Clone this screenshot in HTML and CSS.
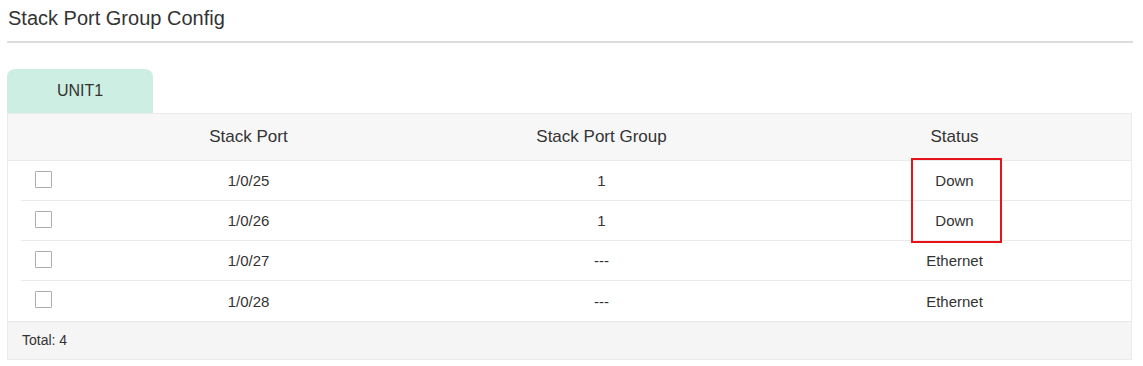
FILE: index.html
```html
<!DOCTYPE html>
<html lang="en">
<head>
  <meta charset="UTF-8" />
  <title>Stack Port Group Config</title>
  <link rel="stylesheet" href="styles.css">
</head>
<body>
  <div class="page">
    <h1 class="title">Stack Port Group Config</h1>

    <div class="tabs">
      <div class="tab active">UNIT1</div>
    </div>

    <div class="grid-wrap">
      <div class="row head">
        <div class="cell check"></div>
        <div class="cell">Stack Port</div>
        <div class="cell">Stack Port Group</div>
        <div class="cell">Status</div>
      </div>

      <div class="row">
        <div class="cell check"><span class="box"></span></div>
        <div class="cell">1/0/25</div>
        <div class="cell">1</div>
        <div class="cell">Down</div>
      </div>
      <div class="row">
        <div class="cell check"><span class="box"></span></div>
        <div class="cell">1/0/26</div>
        <div class="cell">1</div>
        <div class="cell">Down</div>
      </div>
      <div class="row">
        <div class="cell check"><span class="box"></span></div>
        <div class="cell">1/0/27</div>
        <div class="cell">---</div>
        <div class="cell">Ethernet</div>
      </div>
      <div class="row last">
        <div class="cell check"><span class="box"></span></div>
        <div class="cell">1/0/28</div>
        <div class="cell">---</div>
        <div class="cell">Ethernet</div>
      </div>

      <div class="footer">Total: 4</div>

      <!-- highlight around the Down statuses -->
      <div class="mark"></div>
    </div>
  </div>
</body>
</html>
```

FILE: styles.css
```css
body {
  margin: 0;
  padding: 0;
  background: #fff;
  color: #333;
  font-family: "Liberation Sans", Arial, sans-serif;
}

.page {
  padding: 0 10px 0 7px;
}

.title {
  margin: 0;
  padding: 6px 0 11px 1px;
  font-size: 20px;
  line-height: 24px;
  font-weight: normal;
  color: #333;
  border-bottom: 2px solid #dcdcdc;
}

.tabs {
  display: flex;
  margin-top: 26px;
}

.tab {
  width: 146px;
  height: 44px;
  line-height: 44px;
  text-align: center;
  font-size: 16px;
  color: #333;
  border-radius: 8px 8px 0 0;
}

.tab.active {
  background: #cdeee2;
}

.grid-wrap {
  position: relative;
  border: 1px solid #ebebeb;
  width: 1123px;
}

.row {
  display: grid;
  grid-template-columns: 64px repeat(3, 1fr);
  height: 40px;
}

.row.head {
  height: 47px;
  background: #f7f7f7;
  font-size: 17px;
}

.cell {
  display: flex;
  align-items: center;
  justify-content: center;
  border-bottom: 1px solid #ebebeb;
  font-size: 15px;
}

.row.head .cell {
  font-size: 17px;
}

.row .check {
  justify-content: flex-start;
  margin-left: 13px;
  padding-left: 14px;
  padding-bottom: 3px;
}

.row.head .check {
  margin-left: 0;
}

.row.last .cell {
  border-bottom: none;
}

.box {
  display: inline-block;
  width: 15px;
  height: 15px;
  border: 1px solid #adadad;
  border-radius: 1px;
  background: #fff;
}

.footer {
  height: 37px;
  line-height: 37px;
  padding-left: 14px;
  background: #f5f5f5;
  border-top: 1px solid #e6e6e6;
  font-size: 14px;
}

.mark {
  position: absolute;
  left: 903px;
  top: 44px;
  width: 87px;
  height: 81px;
  border: 2px solid #e5141b;
}
```
